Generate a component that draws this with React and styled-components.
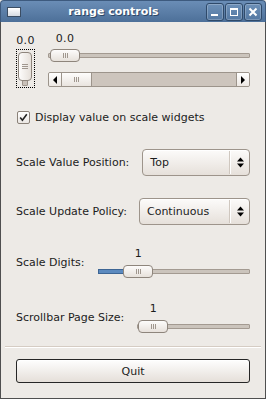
import React from 'react';
import styled, { createGlobalStyle } from 'styled-components';

const Global = createGlobalStyle`
  html, body { margin: 0; padding: 0; background: #edeae6; }
  body {
    font-family: "DejaVu Sans", "Liberation Sans", sans-serif;
    font-size: 11px;
    color: #1c1c1c;
  }
  * { box-sizing: border-box; }
`;

const Window = styled.div`
  width: 266px;
  height: 399px;
  display: flex;
  flex-direction: column;
  background: #edeae6;
`;

const TitleBar = styled.div`
  height: 22px;
  flex: none;
  display: flex;
  align-items: center;
  padding: 0 3px 0 6px;
  background: linear-gradient(#6a8db6, #4d7099);
  border: 1px solid #3d5a7e;
  border-bottom: none;
  border-radius: 4px 4px 0 0;
`;

const WindowIcon = styled.div`
  width: 14px;
  height: 10px;
  border: 1px solid #3b4d63;
  background: linear-gradient(#ffffff, #d6dbe2);
  box-shadow: inset 0 1px 0 #ffffff;
`;

const Title = styled.div`
  flex: 1;
  text-align: center;
  color: #ffffff;
  font-weight: bold;
  font-size: 11px;
  text-shadow: 1px 1px 0 #2e4866;
  padding-bottom: 1px;
`;

const TitleButtons = styled.div`
  display: flex;
  gap: 1px;
`;

const TitleButton = styled.div`
  width: 18px;
  height: 18px;
  border: 1px solid #2f4a6a;
  border-radius: 3px;
  background: linear-gradient(#6d90b8, #5478a2);
  box-shadow: inset 0 0 0 1px rgba(255, 255, 255, 0.22);
  display: flex;
  align-items: center;
  justify-content: center;
`;

const Frame = styled.div`
  flex: 1;
  display: flex;
  flex-direction: column;
  border: 1px solid #4f4f4f;
  border-top: none;
  padding: 0 4px;
`;

const Section = styled.div`
  padding: 0 11px;
  display: flex;
  flex-direction: column;
`;

const TopRow = styled.div`
  margin-top: 10px;
  display: flex;
  align-items: flex-start;
  gap: 13px;
`;

const VColumn = styled.div`
  width: 19px;
  padding-top: 2px;
  display: flex;
  flex-direction: column;
  align-items: center;
`;

const ValueText = styled.div`
  height: 13px;
  line-height: 13px;
  font-size: 11px;
  white-space: nowrap;
  letter-spacing: 0.3px;
`;

const FocusBox = styled.div`
  margin-top: 2px;
  width: 19px;
  height: 39px;
  border: 1px dotted #000;
  position: relative;
`;

const VTrough = styled.div`
  position: absolute;
  left: 5px;
  width: 6px;
  top: 3px;
  bottom: 1px;
  background: #c9c1b9;
  border: 1px solid #9d948b;
  border-radius: 1px;
`;

const VKnob = styled.div`
  position: absolute;
  left: 1px;
  top: 2px;
  width: 14px;
  height: 29px;
  border: 1px solid #8e857c;
  border-radius: 4px;
  background: linear-gradient(90deg, #fdfcfb, #e6e0da);
  display: flex;
  align-items: center;
  justify-content: center;
`;

const HGrip = styled.span`
  width: 6px;
  height: 5px;
  background: repeating-linear-gradient(180deg, #a0978e 0 1px, transparent 1px 2px);
`;

const RightColumn = styled.div`
  flex: 1;
  display: flex;
  flex-direction: column;
`;

const ScaleBlock = styled.div`
  flex: 1;
  display: flex;
  flex-direction: column;
`;

const ScaleValue = styled.div`
  width: 30px;
  margin-left: ${p => p.$offset}px;
  height: 13px;
  line-height: 13px;
  text-align: center;
  letter-spacing: 0.3px;
`;

const Track = styled.div`
  margin-top: ${p => p.$gap}px;
  height: 13px;
  position: relative;
`;

const Trough = styled.div`
  position: absolute;
  left: 0;
  right: 0;
  top: 4px;
  height: 5px;
  background: #cbc4bc;
  border: 1px solid #a39a91;
  border-radius: 1px;
`;

const Fill = styled.div`
  position: absolute;
  left: 0;
  top: 4px;
  height: 5px;
  width: ${p => p.$width}px;
  background: #5c8abf;
  border: 1px solid #3d6594;
`;

const HKnob = styled.div`
  position: absolute;
  top: 0;
  left: ${p => p.$offset}px;
  width: 30px;
  height: 13px;
  border: 1px solid #8e857c;
  border-radius: 4px;
  background: linear-gradient(#fdfcfb, #e7e1db);
  display: flex;
  align-items: center;
  justify-content: center;
`;

const VGrip = styled.span`
  width: 5px;
  height: 5px;
  background: repeating-linear-gradient(90deg, #a0978e 0 1px, transparent 1px 2px);
`;

const Scrollbar = styled.div`
  margin-top: 10px;
  height: 15px;
  display: flex;
  border: 1px solid #9c948b;
  border-radius: 2px;
  background: #cdc5bd;
  overflow: hidden;
`;

const ScrollButton = styled.div`
  width: 13px;
  flex: none;
  display: flex;
  align-items: center;
  justify-content: center;
  background: linear-gradient(#ffffff, #ede8e3);
  border-left: ${p => (p.$side === 'right' ? '1px solid #9c948b' : 'none')};
  border-right: ${p => (p.$side === 'left' ? '1px solid #9c948b' : 'none')};
`;

const Arrow = styled.span`
  width: 0;
  height: 0;
  border-top: 4px solid transparent;
  border-bottom: 4px solid transparent;
  ${p => (p.$dir === 'left' ? 'border-right: 4px solid #000;' : 'border-left: 4px solid #000;')}
`;

const ScrollTroughArea = styled.div`
  flex: 1;
  display: flex;
`;

const Thumb = styled.div`
  width: 30px;
  display: flex;
  align-items: center;
  justify-content: center;
  background: linear-gradient(#fefdfc, #e9e4df);
  border-right: 1px solid #9c948b;
`;

const CheckRow = styled.div`
  margin-top: 23px;
  margin-left: 1px;
  display: flex;
  align-items: center;
  gap: 5px;
  height: 13px;
`;

const CheckBox = styled.div`
  width: 13px;
  height: 13px;
  border: 1px solid #8b8279;
  border-radius: 2px;
  background: linear-gradient(#ffffff, #ebe7e3);
  display: flex;
  align-items: center;
  justify-content: center;
`;

const FormRow = styled.div`
  margin-top: ${p => p.$top}px;
  display: flex;
  align-items: center;
  gap: ${p => p.$gap}px;
`;

const Label = styled.div`
  white-space: nowrap;
`;

const Combo = styled.div`
  flex: 1;
  height: 27px;
  display: flex;
  align-items: center;
  border: 1px solid #9d948b;
  border-radius: 4px;
  background: linear-gradient(#fcfbfa, #e6e0da);
  box-shadow: inset 0 1px 0 #ffffff;
`;

const ComboText = styled.div`
  flex: 1;
  padding-left: 7px;
`;

const ComboSep = styled.div`
  width: 2px;
  align-self: stretch;
  margin: 1px 0;
  border-left: 1px solid #cfc7bf;
  border-right: 1px solid #ffffff;
`;

const ComboArrows = styled.div`
  width: 18px;
  display: flex;
  align-items: center;
  justify-content: center;
`;

const Separator = styled.div`
  margin-top: 13px;
  height: 2px;
  border-top: 1px solid #d5ccc3;
  border-bottom: 1px solid #ffffff;
`;

const QuitButton = styled.div`
  margin-top: 11px;
  height: 24px;
  border: 1px solid #262626;
  border-radius: 3px;
  background: linear-gradient(#fefefe, #e5dfd9);
  box-shadow: inset 0 1px 0 #ffffff;
  display: flex;
  align-items: center;
  justify-content: center;
  font-size: 11px;
`;

function HScale({ value, offset, fill, gap }) {
  return (
    <ScaleBlock>
      <ScaleValue $offset={offset}>{value}</ScaleValue>
      <Track $gap={gap}>
        <Trough />
        {fill ? <Fill $width={offset + 2} /> : null}
        <HKnob $offset={offset}>
          <VGrip />
        </HKnob>
      </Track>
    </ScaleBlock>
  );
}

export default function App() {
  return (
    <>
      <Global />
      <Window>
        <TitleBar>
          <WindowIcon />
          <Title>range controls</Title>
          <TitleButtons>
            <TitleButton>
              <svg width="10" height="10" viewBox="0 0 10 10">
                <rect x="1" y="7" width="7" height="2" fill="#fff" />
              </svg>
            </TitleButton>
            <TitleButton>
              <svg width="10" height="10" viewBox="0 0 10 10">
                <rect x="1.5" y="1.5" width="7" height="7" fill="none" stroke="#fff" strokeWidth="1" />
                <rect x="1" y="1" width="8" height="2" fill="#fff" />
              </svg>
            </TitleButton>
            <TitleButton>
              <svg width="10" height="10" viewBox="0 0 10 10">
                <path d="M1.5 1.5 L8.5 8.5 M8.5 1.5 L1.5 8.5" stroke="#fff" strokeWidth="2" />
              </svg>
            </TitleButton>
          </TitleButtons>
        </TitleBar>
        <Frame>
          <Section>
            <TopRow>
              <VColumn>
                <ValueText>0.0</ValueText>
                <FocusBox>
                  <VTrough />
                  <VKnob>
                    <HGrip />
                  </VKnob>
                </FocusBox>
              </VColumn>
              <RightColumn>
                <HScale value="0.0" offset={2} gap={4} />
                <Scrollbar>
                  <ScrollButton $side="left">
                    <Arrow $dir="left" />
                  </ScrollButton>
                  <ScrollTroughArea>
                    <Thumb>
                      <VGrip />
                    </Thumb>
                  </ScrollTroughArea>
                  <ScrollButton $side="right">
                    <Arrow $dir="right" />
                  </ScrollButton>
                </Scrollbar>
              </RightColumn>
            </TopRow>

            <CheckRow>
              <CheckBox>
                <svg width="9" height="9" viewBox="0 0 9 9">
                  <path d="M1.2 4.6 L3.4 7.2 L7.8 1.2" fill="none" stroke="#222" strokeWidth="1.6" />
                </svg>
              </CheckBox>
              <Label>Display value on scale widgets</Label>
            </CheckRow>

            <FormRow $top={25} $gap={13}>
              <Label>Scale Value Position:</Label>
              <Combo>
                <ComboText>Top</ComboText>
                <ComboSep />
                <ComboArrows>
                  <svg width="7" height="11" viewBox="0 0 7 11">
                    <path d="M3.5 0.5 L7 4.5 L0 4.5 Z M0 6.5 L7 6.5 L3.5 10.5 Z" fill="#000" />
                  </svg>
                </ComboArrows>
              </Combo>
            </FormRow>

            <FormRow $top={22} $gap={12}>
              <Label>Scale Update Policy:</Label>
              <Combo>
                <ComboText>Continuous</ComboText>
                <ComboSep />
                <ComboArrows>
                  <svg width="7" height="11" viewBox="0 0 7 11">
                    <path d="M3.5 0.5 L7 4.5 L0 4.5 Z M0 6.5 L7 6.5 L3.5 10.5 Z" fill="#000" />
                  </svg>
                </ComboArrows>
              </Combo>
            </FormRow>

            <FormRow $top={22} $gap={14}>
              <Label>Scale Digits:</Label>
              <HScale value="1" offset={25} fill gap={5} />
            </FormRow>

            <FormRow $top={24} $gap={13}>
              <Label>Scrollbar Page Size:</Label>
              <HScale value="1" offset={1} gap={5} />
            </FormRow>
          </Section>

          <Separator />

          <Section>
            <QuitButton>Quit</QuitButton>
          </Section>
        </Frame>
      </Window>
    </>
  );
}
